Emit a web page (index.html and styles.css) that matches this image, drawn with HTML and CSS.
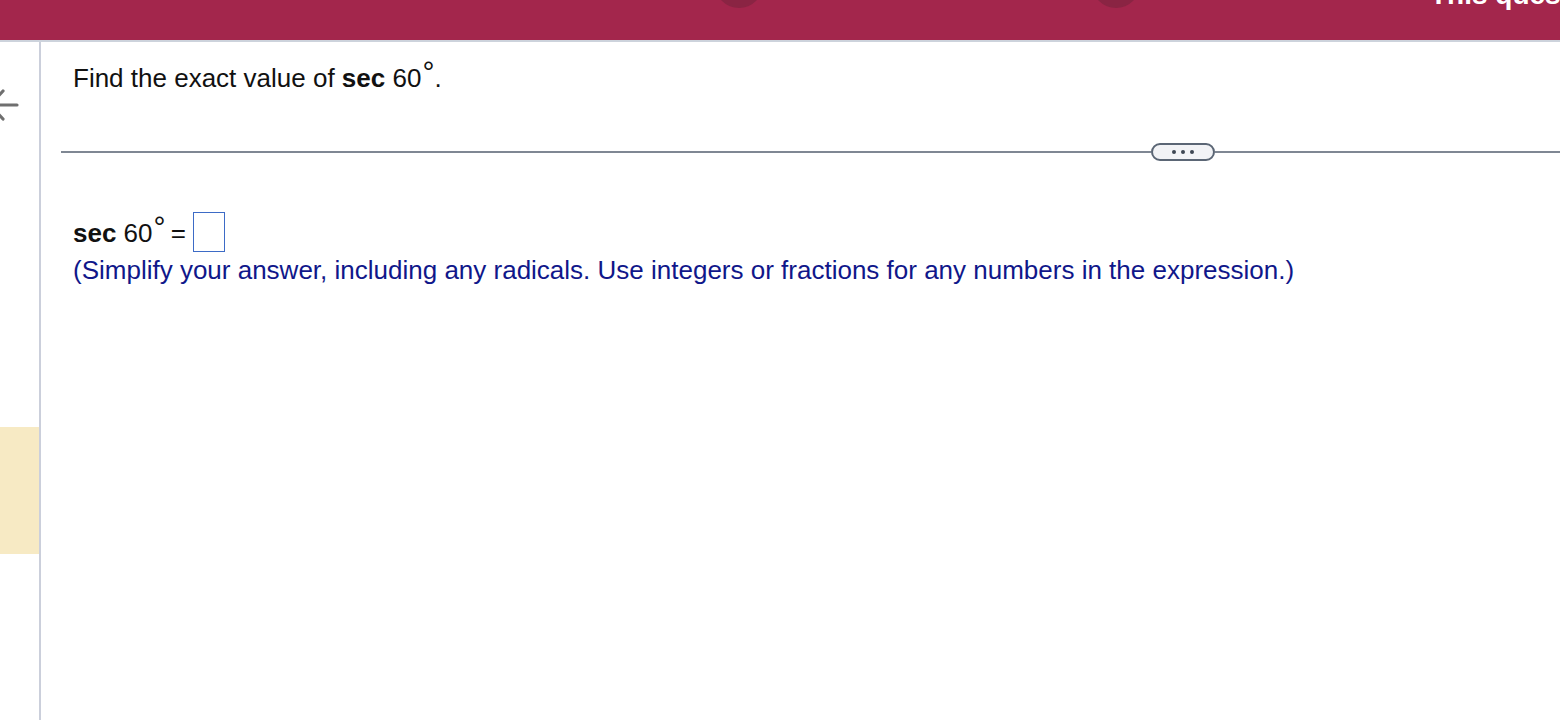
FILE: index.html
```html
<!DOCTYPE html>
<html>
<head>
<meta charset="utf-8">
<link rel="stylesheet" href="styles.css">
</head>
<body>
<header class="topbar">
  <span class="dot dot-a"></span>
  <span class="dot dot-b"></span>
  <span class="top-title">This question</span>
</header>
<div class="layout">
  <aside class="side">
    <div class="arrow">
      <svg width="20" height="50" viewBox="0 0 20 50"><path d="M3 8 L-10 22 L3 36 M-10 22 H17" fill="none" stroke="#6f6f6f" stroke-width="3.2" stroke-linecap="round"/></svg>
    </div>
    <div class="side-mark"></div>
  </aside>
  <main class="content">
    <p class="question">Find the exact value of <b>sec</b> 60<span class="deg">°</span>.</p>
    <div class="divider">
      <span class="line"></span>
      <span class="more"><i></i><i></i><i></i></span>
      <span class="line line-r"></span>
    </div>
    <div class="answer">
      <p class="eq"><b>sec</b> 60<span class="deg">°</span> = <span class="box"></span></p>
      <p class="hint">(Simplify your answer, including any radicals. Use integers or fractions for any numbers in the expression.)</p>
    </div>
  </main>
</div>
</body>
</html>
```
FILE: styles.css
```css
html, body {
  margin: 0;
  padding: 0;
  background: #ffffff;
  font-family: "Liberation Sans", Arial, sans-serif;
  overflow: hidden;
  height: 720px;
}
.topbar {
  position: relative;
  height: 40px;
  background: #a3264c;
  border-bottom: 2px solid #cdd3dc;
  box-sizing: content-box;
  overflow: hidden;
}
.dot {
  position: absolute;
  width: 48px;
  height: 48px;
  border-radius: 50%;
  background: #8a2443;
  top: -40px;
}
.dot-a { left: 715px; }
.dot-b { left: 1092px; }
.top-title {
  position: absolute;
  left: 1430px;
  top: -21px;
  color: #ffffff;
  font-weight: bold;
  font-size: 28px;
  white-space: nowrap;
}
.layout {
  display: flex;
  height: 678px;
}
.side {
  width: 39px;
  border-right: 2px solid #cbcfdb;
  flex: none;
  display: flex;
  flex-direction: column;
}
.arrow {
  height: 50px;
  margin-top: 41px;
}
.arrow svg { display: block; }
.side-mark {
  margin-top: 294px;
  height: 127px;
  background: #f7eac4;
}
.content {
  flex: 1;
  padding-left: 32px;
}
.question {
  margin: 0;
  padding-top: 21px;
  font-size: 26px;
  line-height: 30px;
  color: #111;
}
.deg {
  font-size: 30px;
  line-height: 0;
  position: relative;
  top: -5px;
  margin-left: 1px;
}
.divider {
  display: flex;
  align-items: center;
  margin-top: 50px;
  margin-left: -12px;
  height: 18px;
}
.line {
  height: 2px;
  background: #7f8793;
  width: 1090px;
}
.line-r { flex: 1; width: auto; }
.more {
  width: 60px;
  height: 14px;
  border: 2px solid #5b6675;
  border-radius: 9px;
  background: #f2f3f6;
  display: flex;
  justify-content: center;
  align-items: center;
  gap: 5px;
}
.more i {
  width: 4px;
  height: 4px;
  background: #3e4753;
  border-radius: 50%;
}
.answer {
  margin-top: 51px;
}
.eq {
  margin: 0;
  font-size: 26px;
  line-height: 40px;
  color: #111;
}
.eq .deg { margin-right: -2px; }
.box {
  display: inline-block;
  box-sizing: border-box;
  width: 32px;
  height: 40px;
  border: 1.5px solid #3d6bc6;
  vertical-align: -10px;
  margin-left: 0;
}
.hint {
  margin: 2px 0 0 0;
  font-size: 26px;
  line-height: 30px;
  color: #10178a;
}
```
